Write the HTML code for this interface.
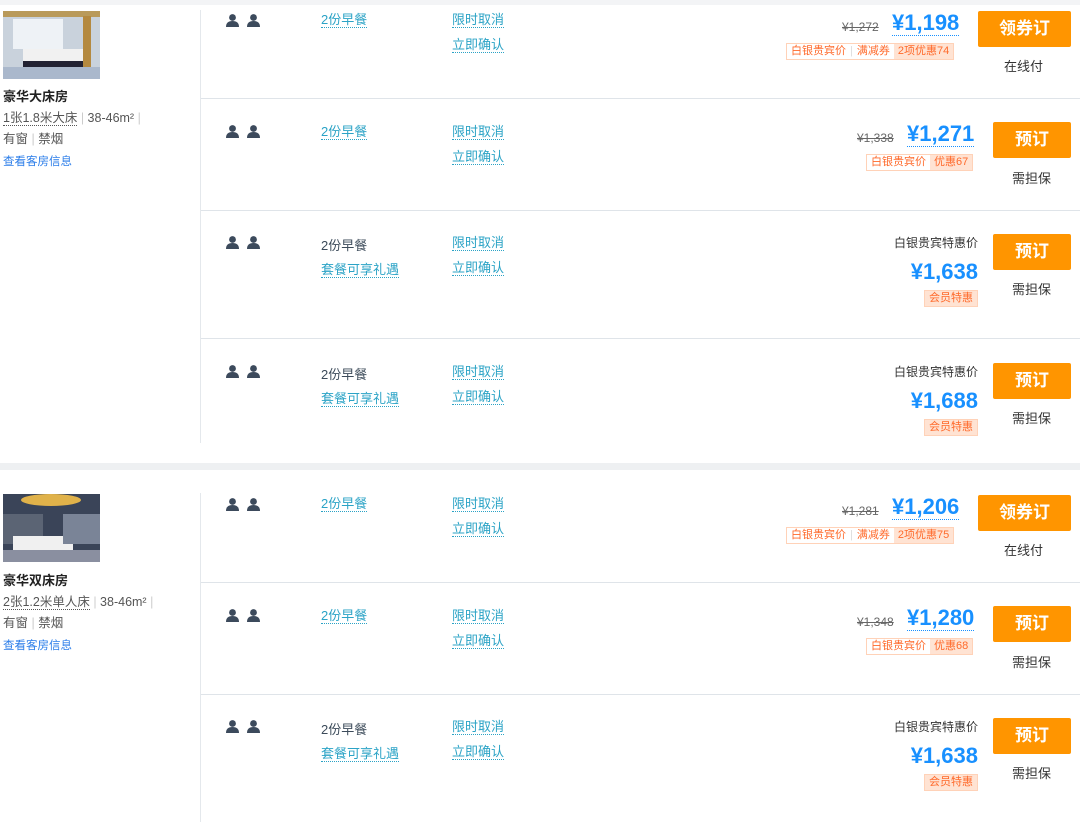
<!DOCTYPE html><html style="width:1080px;height:822px;overflow:hidden"><head><meta charset="utf-8"><style>
*{margin:0;padding:0;box-sizing:border-box}
body{width:1080px;height:822px;background:#fff;font-family:"Liberation Sans","Noto Sans CJK SC",sans-serif;font-size:13px;color:#333;position:relative;overflow:hidden}
.a{position:absolute;white-space:nowrap}
.sec{position:absolute;left:0;width:1080px;height:484px}
.vl{position:absolute;left:200px;width:1px;background:#e4e8ec}
.hl{position:absolute;left:201px;right:0;height:1px;background:#dfe4e9}
.img{position:absolute;left:3px;top:11px;width:97px;height:68px}
.t{color:#2ba3c6;border-bottom:1px dotted #2ba3c6;line-height:15px}
.p{color:#3c4b5a}
.person{position:absolute;width:13px;height:13px}
.btn{position:absolute;background:#ff9500;color:#fff;font-size:17px;font-weight:bold;text-align:center;line-height:36px;border-radius:2px;height:36px}
.big{color:#1890ff;font-size:22px;font-weight:bold;line-height:24px}
.big.u{border-bottom:1px dotted #1890ff}
.s{color:#666;text-decoration:line-through;font-size:12px}
.tags{position:absolute;height:17px;border:1px solid #ffd2b8;font-size:11px;line-height:15px;color:#ff6a2b;display:flex}
.tags span{padding:0 4px}
.tags .f{background:#ffe3d3}
.pay{font-size:13px;color:#333;}
</style></head><body>
<div class="a" style="left:0;top:0;width:1080px;height:5px;background:#f3f4f6"></div>
<div class="a" style="left:0;top:463px;width:1080px;height:7px;background:#eef0f2"></div>

<div class="sec" style="top:0">
<div class="vl" style="top:10px;height:433px"></div>
<div class="hl" style="top:98px"></div><div class="hl" style="top:210px"></div><div class="hl" style="top:338px"></div>
<svg class="img" viewBox="0 0 97 68"><rect width="97" height="68" fill="#c9d2dc"/><rect x="0" y="0" width="97" height="6" fill="#b99a5a"/><rect x="10" y="8" width="50" height="30" fill="#eef2f6"/><rect x="80" y="5" width="8" height="60" fill="#b4893f"/><rect x="20" y="38" width="60" height="18" fill="#f1f1f1"/><rect x="20" y="50" width="60" height="6" fill="#223"/><rect x="0" y="56" width="97" height="12" fill="#aab8cc"/></svg>
<div class="a" style="left:3px;top:86px;font-weight:bold;font-size:13px;color:#222">豪华大床房</div>
<div class="a" style="left:3px;top:107px;font-size:12.5px;color:#555"><span style="border-bottom:1px dotted #555">1张1.8米大床</span> <span style="color:#ccc">|</span> 38-46m² <span style="color:#ccc">|</span></div>
<div class="a" style="left:3px;top:128px;font-size:12.5px;color:#555">有窗 <span style="color:#ccc">|</span> 禁烟</div>
<div class="a" style="left:3px;top:153px;font-size:11.5px;color:#2b7de9">查看客房信息</div>
</div>

<div class="sec" style="top:484px;height:338px;overflow:hidden">
<div class="vl" style="top:9px;height:329px"></div>
<div class="hl" style="top:98px"></div><div class="hl" style="top:210px"></div>
<svg class="img" viewBox="0 0 97 68" style="top:10px"><rect width="97" height="68" fill="#3a4458"/><ellipse cx="48" cy="6" rx="30" ry="6" fill="#e0b24a"/><rect x="0" y="20" width="40" height="30" fill="#5b6474"/><rect x="10" y="42" width="60" height="14" fill="#f0f0f0"/><rect x="60" y="20" width="37" height="30" fill="#7a8497"/><rect x="0" y="56" width="97" height="12" fill="#8a8fa0"/></svg>
<div class="a" style="left:3px;top:86px;font-weight:bold;font-size:13px;color:#222">豪华双床房</div>
<div class="a" style="left:3px;top:107px;font-size:12.5px;color:#555"><span style="border-bottom:1px dotted #555">2张1.2米单人床</span> <span style="color:#ccc">|</span> 38-46m² <span style="color:#ccc">|</span></div>
<div class="a" style="left:3px;top:128px;font-size:12.5px;color:#555">有窗 <span style="color:#ccc">|</span> 禁烟</div>
<div class="a" style="left:3px;top:153px;font-size:11.5px;color:#2b7de9">查看客房信息</div>
</div>

<svg width="0" height="0" style="position:absolute"><defs><g id="pp"><circle cx="6.5" cy="3.5" r="3.4" fill="#3c4a5c"/><path d="M0 13 Q0 7 6.5 7 Q13 7 13 13Z" fill="#3c4a5c"/></g></defs></svg>

<svg class="person" style="left:226px;top:14px"><use href="#pp"/></svg><svg class="person" style="left:247px;top:14px"><use href="#pp"/></svg>
<div class="a t" style="left:321px;top:12px">2份早餐</div>
<div class="a t" style="left:452px;top:12px">限时取消</div><div class="a t" style="left:452px;top:37px">立即确认</div>
<div class="a s" style="left:842px;top:20px">¥1,272</div><div class="a big u" style="left:892px;top:11px">¥1,198</div>
<div class="tags" style="left:786px;top:43px"><span>白银贵宾价</span><span style="color:#ddd;padding:0">|</span><span>满减券</span><span class="f">2项优惠74</span></div>
<div class="btn" style="left:978px;top:11px;width:93px">领券订</div><div class="a pay" style="left:1004px;top:56px">在线付</div>

<svg class="person" style="left:226px;top:125px"><use href="#pp"/></svg><svg class="person" style="left:247px;top:125px"><use href="#pp"/></svg>
<div class="a t" style="left:321px;top:124px">2份早餐</div>
<div class="a t" style="left:452px;top:124px">限时取消</div><div class="a t" style="left:452px;top:149px">立即确认</div>
<div class="a s" style="left:857px;top:131px">¥1,338</div><div class="a big u" style="left:907px;top:122px">¥1,271</div>
<div class="tags" style="left:866px;top:154px"><span>白银贵宾价</span><span class="f">优惠67</span></div>
<div class="btn" style="left:993px;top:122px;width:78px">预订</div><div class="a pay" style="left:1012px;top:168px">需担保</div>

<svg class="person" style="left:226px;top:236px"><use href="#pp"/></svg><svg class="person" style="left:247px;top:236px"><use href="#pp"/></svg>
<div class="a p" style="left:321px;top:235px">2份早餐</div><div class="a t" style="left:321px;top:262px">套餐可享礼遇</div>
<div class="a t" style="left:452px;top:235px">限时取消</div><div class="a t" style="left:452px;top:260px">立即确认</div>
<div class="a" style="right:102px;top:234px;font-size:12px;color:#333">白银贵宾特惠价</div><div class="a big" style="right:102px;top:260px">¥1,638</div>
<div class="tags" style="right:102px;top:290px"><span class="f">会员特惠</span></div>
<div class="btn" style="left:993px;top:234px;width:78px">预订</div><div class="a pay" style="left:1012px;top:279px">需担保</div>

<svg class="person" style="left:226px;top:365px"><use href="#pp"/></svg><svg class="person" style="left:247px;top:365px"><use href="#pp"/></svg>
<div class="a p" style="left:321px;top:364px">2份早餐</div><div class="a t" style="left:321px;top:391px">套餐可享礼遇</div>
<div class="a t" style="left:452px;top:364px">限时取消</div><div class="a t" style="left:452px;top:389px">立即确认</div>
<div class="a" style="right:102px;top:363px;font-size:12px;color:#333">白银贵宾特惠价</div><div class="a big" style="right:102px;top:389px">¥1,688</div>
<div class="tags" style="right:102px;top:419px"><span class="f">会员特惠</span></div>
<div class="btn" style="left:993px;top:363px;width:78px">预订</div><div class="a pay" style="left:1012px;top:408px">需担保</div>

<svg class="person" style="left:226px;top:498px"><use href="#pp"/></svg><svg class="person" style="left:247px;top:498px"><use href="#pp"/></svg>
<div class="a t" style="left:321px;top:496px">2份早餐</div>
<div class="a t" style="left:452px;top:496px">限时取消</div><div class="a t" style="left:452px;top:521px">立即确认</div>
<div class="a s" style="left:842px;top:504px">¥1,281</div><div class="a big u" style="left:892px;top:495px">¥1,206</div>
<div class="tags" style="left:786px;top:527px"><span>白银贵宾价</span><span style="color:#ddd;padding:0">|</span><span>满减券</span><span class="f">2项优惠75</span></div>
<div class="btn" style="left:978px;top:495px;width:93px">领券订</div><div class="a pay" style="left:1004px;top:540px">在线付</div>

<svg class="person" style="left:226px;top:609px"><use href="#pp"/></svg><svg class="person" style="left:247px;top:609px"><use href="#pp"/></svg>
<div class="a t" style="left:321px;top:608px">2份早餐</div>
<div class="a t" style="left:452px;top:608px">限时取消</div><div class="a t" style="left:452px;top:633px">立即确认</div>
<div class="a s" style="left:857px;top:615px">¥1,348</div><div class="a big u" style="left:907px;top:606px">¥1,280</div>
<div class="tags" style="left:866px;top:638px"><span>白银贵宾价</span><span class="f">优惠68</span></div>
<div class="btn" style="left:993px;top:606px;width:78px">预订</div><div class="a pay" style="left:1012px;top:652px">需担保</div>

<svg class="person" style="left:226px;top:720px"><use href="#pp"/></svg><svg class="person" style="left:247px;top:720px"><use href="#pp"/></svg>
<div class="a p" style="left:321px;top:719px">2份早餐</div><div class="a t" style="left:321px;top:746px">套餐可享礼遇</div>
<div class="a t" style="left:452px;top:719px">限时取消</div><div class="a t" style="left:452px;top:744px">立即确认</div>
<div class="a" style="right:102px;top:718px;font-size:12px;color:#333">白银贵宾特惠价</div><div class="a big" style="right:102px;top:744px">¥1,638</div>
<div class="tags" style="right:102px;top:774px"><span class="f">会员特惠</span></div>
<div class="btn" style="left:993px;top:718px;width:78px">预订</div><div class="a pay" style="left:1012px;top:763px">需担保</div>
</body></html>
